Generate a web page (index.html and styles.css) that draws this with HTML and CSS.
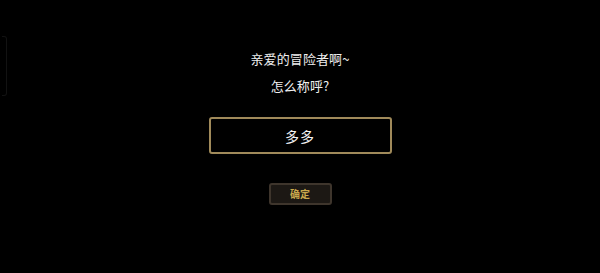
FILE: index.html
```html
<!DOCTYPE html>
<html lang="zh">
<head>
<meta charset="utf-8">
<link rel="stylesheet" href="styles.css">
</head>
<body>
<div class="edge"></div>
<main class="dialog">
  <p class="line first">亲爱的冒险者啊~</p>
  <p class="line second">怎么称呼?</p>
  <div class="name-box">多多</div>
  <button class="confirm">确定</button>
</main>
</body>
</html>
```
FILE: styles.css
```css
html, body {
  margin: 0;
  padding: 0;
  background: #000;
  width: 600px;
  height: 273px;
  overflow: hidden;
}
body {
  font-family: "Noto Sans CJK SC", "Noto Sans", sans-serif;
  color: #f0f0f0;
}
.edge {
  position: absolute;
  left: 2px;
  top: 36px;
  width: 4px;
  height: 58px;
  border: 1px solid #121212;
  border-left: none;
  border-radius: 0 3px 3px 0;
}
.dialog {
  display: flex;
  flex-direction: column;
  align-items: center;
  padding-top: 50px;
}
.line {
  margin: 0;
  font-size: 13px;
  line-height: 18px;
  letter-spacing: 0.1px;
}
.second {
  margin-top: 9px;
}
.name-box {
  margin-top: 22px;
  box-sizing: border-box;
  width: 183px;
  height: 37px;
  border: 2px solid #a08a5a;
  border-radius: 3px;
  background: #000;
  display: flex;
  align-items: center;
  justify-content: center;
  font-size: 14px;
  letter-spacing: 1px;
  color: #f4f4f4;
}
.confirm {
  margin-top: 29px;
  box-sizing: border-box;
  width: 63px;
  height: 22px;
  background: #1c1814;
  border: 2px solid #3e352c;
  border-radius: 3px;
  color: #c9a84c;
  font-family: "Noto Sans CJK SC", sans-serif;
  font-size: 10px;
  font-weight: bold;
  padding: 0;
  line-height: 18px;
}
```
